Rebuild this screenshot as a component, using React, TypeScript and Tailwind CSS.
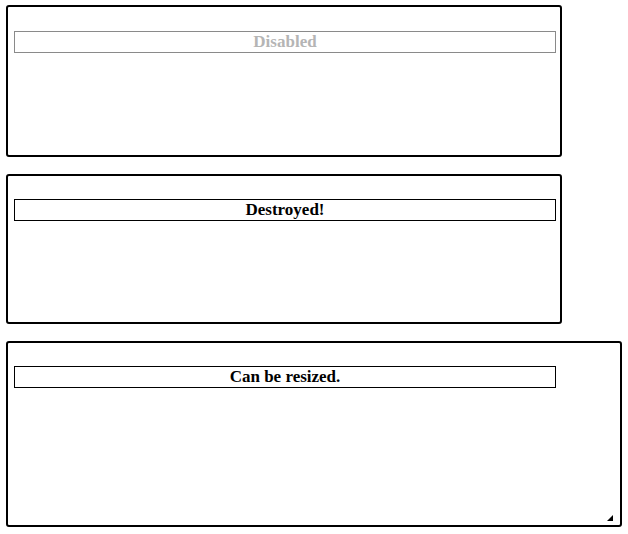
import React from "react";

const serif = { fontFamily: '"Liberation Serif", "Times New Roman", serif' };

function Header({ children, disabled }: { children: React.ReactNode; disabled?: boolean }) {
  return (
    <h3
      className={
        "w-[542px] h-[22px] border text-center font-bold text-[17px] leading-[20px] " +
        (disabled ? "border-[#8a8a8a] text-[#b5b5b5]" : "border-black text-black")
      }
      style={serif}
    >
      {children}
    </h3>
  );
}

export default function App() {
  return (
    <div className="bg-white w-[628px] h-[534px] pt-[5px] pl-[6px] flex flex-col gap-[17px]" style={serif}>
      <div className="w-[556px] h-[152px] border-2 border-black rounded-[3px] px-[6px] pt-[24px]">
        <Header disabled>Disabled</Header>
      </div>
      <div className="w-[556px] h-[150px] border-2 border-black rounded-[3px] px-[6px] pt-[23px]">
        <Header>Destroyed!</Header>
      </div>
      <div className="relative w-[616px] h-[186px] border-2 border-black rounded-[3px] px-[6px] pt-[23px]">
        <Header>Can be resized.</Header>
        <svg className="absolute right-[7px] bottom-[4px]" width="6" height="6" viewBox="0 0 6 6">
          <polygon points="6,0 6,6 0,6" fill="black" />
        </svg>
      </div>
    </div>
  );
}
